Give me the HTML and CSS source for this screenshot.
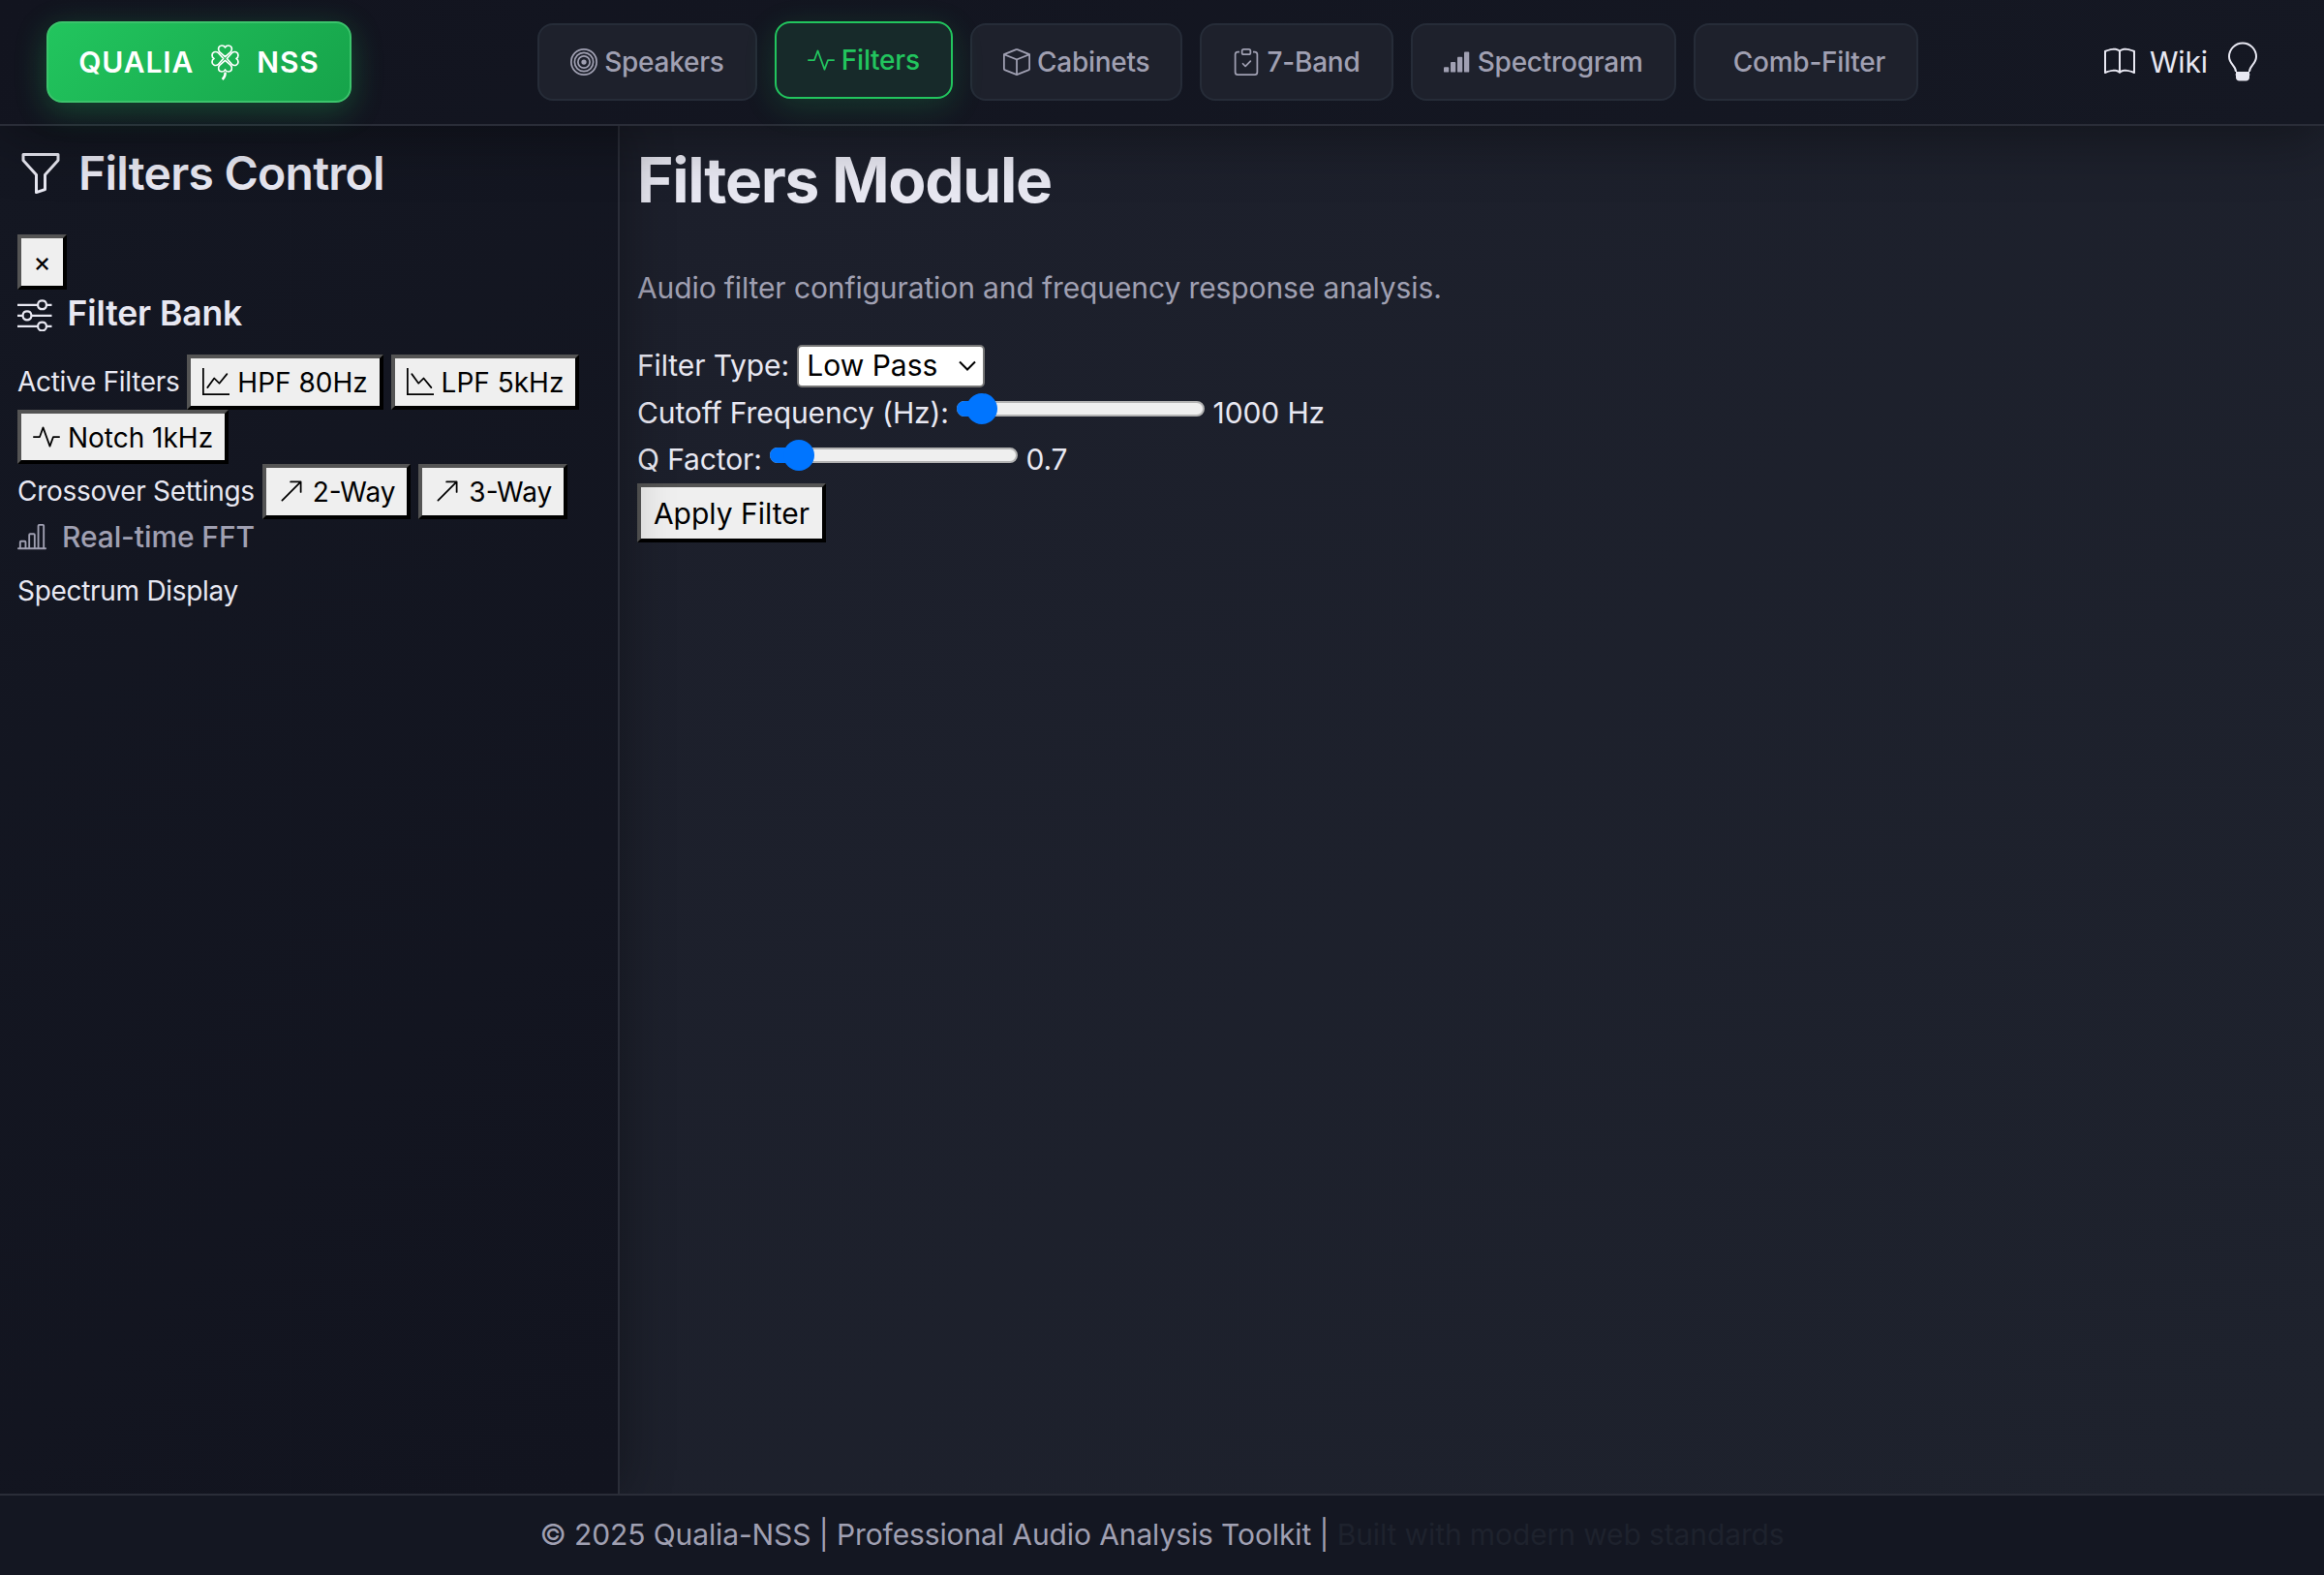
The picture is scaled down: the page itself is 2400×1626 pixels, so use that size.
FILE: index.html
```html
<!DOCTYPE html>
<html lang="en">
<head>
<meta charset="utf-8">
<title>Qualia-NSS</title>
<link rel="stylesheet" href="styles.css">
</head>
<body>
<header class="header">
  <a class="logo">QUALIA
    <svg class="clover" viewBox="0 0 29 37" fill="none" stroke="currentColor" stroke-width="1.7" stroke-linejoin="round"><defs><path id="leaf" d="M14.500 12.700L8.700 7.600C6.200 4.500 8 1 11 1C12.700 1 14 1.900 14.500 3C15 1.900 16.300 1 18 1C21 1 22.800 4.500 20.300 7.600Z"/></defs><use href="#leaf"/><use href="#leaf" transform="rotate(90 14.500 14.500)"/><use href="#leaf" transform="rotate(180 14.500 14.500)"/><use href="#leaf" transform="rotate(270 14.500 14.500)"/><path d="M14.600 28.500c.2 3-.8 5.500-3 7.500" stroke-width="2.500"/></svg>
    NSS</a>
  <nav class="nav">
    <a class="tab"><svg class="bi" viewBox="0 0 16 16" fill="none" stroke="currentColor"><circle cx="8" cy="8" r="7.5"/><circle cx="8" cy="8" r="5.5"/><circle cx="8" cy="8" r="3.5"/><circle cx="8" cy="8" r="1.5" fill="currentColor" stroke="none"/></svg> Speakers</a>
    <a class="tab active"><svg class="bi" viewBox="0 0 16 16"><path fill-rule="evenodd" d="M6 2a.5.5 0 0 1 .47.33L10 12.036l1.53-4.208A.5.5 0 0 1 12 7.5h3.5a.5.5 0 0 1 0 1h-3.15l-1.88 5.17a.5.5 0 0 1-.94 0L6 3.964 4.47 8.171A.5.5 0 0 1 4 8.5H.5a.5.5 0 0 1 0-1h3.15l1.88-5.17A.5.5 0 0 1 6 2"/></svg> Filters</a>
    <a class="tab"><svg class="bi" viewBox="0 0 16 16"><path d="M8.186 1.113a.5.5 0 0 0-.372 0L1.846 3.5 8 5.961 14.154 3.5zM15 4.239l-6.5 2.6v7.922l6.5-2.6V4.24zM7.5 14.762V6.838L1 4.239v7.923zM7.443.184a1.5 1.5 0 0 1 1.114 0l7.129 2.852A.5.5 0 0 1 16 3.5v8.662a1 1 0 0 1-.629.928l-7.185 2.874a.5.5 0 0 1-.372 0L.63 13.09a1 1 0 0 1-.63-.928V3.5a.5.5 0 0 1 .314-.464z"/></svg> Cabinets</a>
    <a class="tab"><svg class="bi" viewBox="0 0 16 16"><path fill-rule="evenodd" d="M10.854 7.146a.5.5 0 0 1 0 .708l-3 3a.5.5 0 0 1-.708 0l-1.5-1.5a.5.5 0 1 1 .708-.708L7.5 9.793l2.646-2.647a.5.5 0 0 1 .708 0"/><path d="M4 1.5H3a2 2 0 0 0-2 2V14a2 2 0 0 0 2 2h10a2 2 0 0 0 2-2V3.500a2 2 0 0 0-2-2h-1v1h1a1 1 0 0 1 1 1V14a1 1 0 0 1-1 1H3a1 1 0 0 1-1-1V3.500a1 1 0 0 1 1-1h1z"/><path d="M9.500 1a.5.5 0 0 1 .5.5v1a.5.5 0 0 1-.5.5h-3a.5.5 0 0 1-.5-.5v-1a.5.5 0 0 1 .5-.5zm-3-1A1.500 1.500 0 0 0 5 1.500v1A1.500 1.500 0 0 0 6.500 4h3A1.500 1.500 0 0 0 11 2.500v-1A1.500 1.500 0 0 0 9.500 0z"/></svg> 7-Band</a>
    <a class="tab"><svg class="bi" viewBox="0 0 16 16"><rect x="0" y="11" width="3" height="3" rx=".5"/><rect x="4" y="8" width="3" height="6" rx=".5"/><rect x="8" y="5" width="3" height="9" rx=".5"/><rect x="12" y="2" width="3" height="12" rx=".5"/></svg> Spectrogram</a>
    <a class="tab">&nbsp;Comb-Filter</a>
  </nav>
  <div class="tools">
    <svg class="book" viewBox="0 0 16 16"><path d="M1 2.828c.885-.37 2.154-.769 3.388-.893 1.330-.134 2.458.063 3.112.752v9.746c-.935-.53-2.120-.603-3.213-.493-1.180.12-2.370.461-3.287.811zm7.500-.141c.654-.689 1.782-.886 3.112-.752 1.234.124 2.503.523 3.388.893v9.923c-.918-.35-2.107-.692-3.287-.81-1.094-.111-2.278-.039-3.213.492zM8 1.783C7.015.936 5.587.81 4.287.94c-1.514.153-3.042.672-3.994 1.105A.5.5 0 0 0 0 2.500v11a.5.5 0 0 0 .707.455c.882-.4 2.303-.881 3.680-1.020 1.409-.142 2.590.087 3.223.877a.5.5 0 0 0 .78 0c.633-.79 1.814-1.019 3.222-.877 1.378.139 2.800.62 3.681 1.020A.5.5 0 0 0 16 13.500v-11a.5.5 0 0 0-.293-.455c-.952-.433-2.480-.952-3.994-1.105C10.413.809 8.985.936 8 1.783"/></svg>
    <span class="wiki">Wiki</span>
    <svg class="bulb" viewBox="0 0 32 42"><path fill="none" stroke="currentColor" stroke-width="2" d="M9 31C9 25 2 23 2 15.500A14 14 0 0 1 30 15.500C30 23 23 25 23 31"/><path d="M9 31h14v2l.5 1-.5 1v2c0 2-1.500 3.500-3.500 3.500h-7C10.500 40.500 9 39 9 37v-2l-.5-1 .5-1z"/></svg>
  </div>
</header>
<div class="body">
  <aside class="sidebar">
    <h4 class="side-title"><svg class="funnel" viewBox="0 0 16 16"><path d="M1.500 1.500A.5.5 0 0 1 2 1h12a.5.5 0 0 1 .5.5v2a.5.5 0 0 1-.128.334L10 8.692V13.500a.5.5 0 0 1-.342.474l-3 1A.5.5 0 0 1 6 14.500V8.692L1.628 3.834A.5.5 0 0 1 1.500 3.500zm1 .5v1.308l4.372 4.858A.5.5 0 0 1 7 8.500v5.306l2-.666V8.500a.5.5 0 0 1 .128-.334L13.500 3.308V2z"/></svg>Filters Control</h4>
    <button class="btn close">×</button>
    <h5 class="bank"><svg class="bi" viewBox="0 0 16 16"><path fill-rule="evenodd" d="M11.500 2a1.500 1.500 0 1 0 0 3 1.500 1.500 0 0 0 0-3M9.050 3a2.500 2.500 0 0 1 4.900 0H16v1h-2.050a2.500 2.500 0 0 1-4.900 0H0V3zM4.500 7a1.500 1.500 0 1 0 0 3 1.500 1.500 0 0 0 0-3M2.050 8a2.500 2.500 0 0 1 4.900 0H16v1H6.950a2.500 2.500 0 0 1-4.900 0H0V8zm9.450 4a1.500 1.500 0 1 0 0 3 1.500 1.500 0 0 0 0-3m-2.450 1a2.500 2.500 0 0 1 4.900 0H16v1h-2.050a2.500 2.500 0 0 1-4.900 0H0v-1z"/></svg>Filter Bank</h5>
    <div class="group">Active Filters
      <button class="btn"><svg class="bi" viewBox="0 0 16 16"><path fill-rule="evenodd" d="M0 0h1v15h15v1H0zm14.817 3.113a.5.5 0 0 1 .07.704l-4.500 5.500a.5.5 0 0 1-.74.037L7.060 6.767l-3.656 5.027a.5.5 0 0 1-.808-.588l4-5.500a.5.5 0 0 1 .758-.06l2.609 2.610 4.150-5.073a.5.5 0 0 1 .704-.07"/></svg> HPF 80Hz</button>
      <button class="btn"><svg class="bi" viewBox="0 0 16 16"><path fill-rule="evenodd" d="M0 0h1v15h15v1H0zm14.817 11.887a.5.5 0 0 0 .07-.704l-4.500-5.500a.5.5 0 0 0-.74-.037L7.060 8.233 3.404 3.206a.5.5 0 0 0-.808.588l4 5.500a.5.5 0 0 0 .758.06l2.609-2.610 4.150 5.073a.5.5 0 0 0 .704.07"/></svg> LPF 5kHz</button>
      <button class="btn"><svg class="bi" viewBox="0 0 16 16"><path fill-rule="evenodd" d="M6 2a.5.5 0 0 1 .47.33L10 12.036l1.530-4.208A.5.5 0 0 1 12 7.500h3.500a.5.5 0 0 1 0 1h-3.150l-1.880 5.170a.5.5 0 0 1-.94 0L6 3.964 4.470 8.171A.5.5 0 0 1 4 8.500H.5a.5.5 0 0 1 0-1h3.150l1.880-5.170A.5.5 0 0 1 6 2"/></svg> Notch 1kHz</button>
    </div>
    <div class="group">Crossover Settings
      <button class="btn"><svg class="bi" viewBox="0 0 16 16"><path fill-rule="evenodd" d="M14 2.500a.5.5 0 0 0-.5-.5h-6a.5.5 0 0 0 0 1h4.793L2.146 13.146a.5.5 0 0 0 .708.708L13 3.707V8.500a.5.5 0 0 0 1 0z"/></svg> 2-Way</button>
      <button class="btn"><svg class="bi" viewBox="0 0 16 16"><path fill-rule="evenodd" d="M14 2.500a.5.5 0 0 0-.5-.5h-6a.5.5 0 0 0 0 1h4.793L2.146 13.146a.5.5 0 0 0 .708.708L13 3.707V8.500a.5.5 0 0 0 1 0z"/></svg> 3-Way</button>
    </div>
    <h6 class="fft"><svg class="bi" viewBox="0 0 16 16"><path d="M11 2a1 1 0 0 1 1-1h2a1 1 0 0 1 1 1v12h.5a.5.5 0 0 1 0 1H.5a.5.5 0 0 1 0-1H1v-3a1 1 0 0 1 1-1h2a1 1 0 0 1 1 1v3h1V7a1 1 0 0 1 1-1h2a1 1 0 0 1 1 1v7h1zm1 12h2V2h-2zm-3 0V7H7v7zm-5 0v-3H2v3z"/></svg>Real-time FFT</h6>
    <div class="group">Spectrum Display</div>
  </aside>
  <main class="main">
    <h1 class="title">Filters Module</h1>
    <p class="lead">Audio filter configuration and frequency response analysis.</p>
    <div class="field">Filter Type: <span class="select">Low Pass<svg class="chev" viewBox="0 0 18 12" fill="none" stroke="currentColor" stroke-width="2"><path d="M1 1.500l8 8 8-8"/></svg></span></div>
    <div class="field">Cutoff Frequency (Hz): <span class="range"><span class="fill"></span><span class="knob"></span></span> 1000 Hz</div>
    <div class="field">Q Factor: <span class="range q"><span class="fill"></span><span class="knob"></span></span> 0.7</div>
    <button class="btn apply">Apply Filter</button>
  </main>
</div>
<footer class="footer"><span>© 2025 Qualia-NSS | Professional Audio Analysis Toolkit | <span class="dim">Built with modern web standards</span></span></footer>
</body>
</html>
```
FILE: styles.css
```css
* { box-sizing: border-box; }
body {
  margin: 0;
  height: 1626px;
  overflow: hidden;
  display: flex;
  flex-direction: column;
  font: 30px/1.6 Inter, sans-serif;
  letter-spacing: -.11px;
  color: #e8e8f2;
  background: #141722;
}
svg { fill: currentColor; }
svg[fill="none"] { fill: none; }
.bi { width: 1em; height: 1em; vertical-align: -0.125em; }
.header {
  position: relative;
  z-index: 3;
  height: 130px;
  flex: none;
  display: flex;
  align-items: center;
  padding: 0 68px 0 48px;
  border-bottom: 2px solid #2a2d38;
  background: linear-gradient(135deg, #12141f, #151823);
  box-shadow: 0 8px 64px rgba(0, 0, 0, .4);
}
.logo {
  display: flex;
  align-items: center;
  justify-content: center;
  gap: 18px;
  width: 315px;
  height: 84px;
  border: 2px solid #3cc46c;
  border-radius: 16px;
  background: linear-gradient(135deg, #22c55e, #16a34a);
  box-shadow: 0 8px 32px rgba(34, 197, 94, .3);
  color: #fff;
  font-weight: 600;
  letter-spacing: .9px;
}
.clover { width: 29px; height: 37px; }
.nav { display: flex; gap: 18px; margin-left: 192px; }
.tab {
  height: 80px;
  padding: 0 32px;
  border: 2px solid #262c38;
  border-radius: 16px;
  background: #1e212c;
  color: #a0a0b2;
  font-size: 28px;
  font-weight: 500;
  letter-spacing: -.25px;
  line-height: 76px;
  white-space: nowrap;
}
.tab.active {
  color: #22c55e;
  border-color: #22c55e;
  background: #172a2a;
  transform: translateY(-2px);
  box-shadow: 0 8px 32px rgba(34, 197, 94, .2);
}
.tools { display: flex; align-items: center; margin-left: auto; }
.book { width: 32px; height: 32px; margin-right: 15px; }
.wiki { margin-right: 20px; }
.bulb { width: 32px; height: 42px; }
.body { flex: 1; display: flex; min-height: 0; }
.sidebar {
  position: relative;
  z-index: 2;
  width: 640px;
  flex: none;
  padding: 16px 18px;
  border-right: 2px solid #2a2d38;
  background: linear-gradient(135deg, #141722, #12141f);
  box-shadow: 4px 0 48px rgba(0, 0, 0, .3);
  font-size: 28px;
}
.side-title {
  display: flex;
  align-items: center;
  height: 66px;
  margin: 0 0 30px;
  font-size: 48px;
  font-weight: 600;
  letter-spacing: -.75px;
}
.funnel { width: 48px; height: 48px; margin-right: 15px; }
.btn {
  height: 56.5px;
  padding: 0 12px;
  border: 4px outset #000;
  border-radius: 0;
  background: #efefef;
  color: #000;
  font: 28px/1 Inter, sans-serif;
  letter-spacing: 0;
}
.close { display: block; width: 51px; }
.bank {
  display: flex;
  align-items: center;
  gap: 16px;
  height: 51.5px;
  margin: 0 0 16px;
  font-size: 35.5px;
  font-weight: 600;
}
.group {
  display: flex;
  flex-wrap: wrap;
  align-items: center;
  column-gap: 8px;
  line-height: 56.5px;
  letter-spacing: -.3px;
}
.fft {
  display: flex;
  align-items: center;
  gap: 16px;
  height: 37px;
  margin: 0 0 9px;
  color: #a0a0b2;
  font-size: 30px;
  font-weight: 500;
}
.main { flex: 1; padding: 18px; background: linear-gradient(135deg, #1c1f2b, #1e222d); }
.title { margin: 0 0 49px; font-size: 64px; line-height: 76px; font-weight: 700; letter-spacing: -1.28px; }
.lead { margin: 0 0 32px; color: #a0a0b2; line-height: 48px; }
.field { height: 48.7px; line-height: 48.7px; white-space: nowrap; }
.select {
  display: inline-flex;
  align-items: center;
  justify-content: space-between;
  width: 194px;
  height: 44px;
  padding: 0 7px 0 8px;
  vertical-align: middle;
  margin-top: -4px;
  border: 2px solid #767676;
  border-radius: 5px;
  background: #fff;
  color: #000;
  letter-spacing: 0;
}
.chev { width: 18px; height: 12px; }
.range {
  position: relative;
  display: inline-block;
  width: 256px;
  height: 16px;
  border: 2px solid #b2b2b2;
  border-radius: 8px;
  background: #efefef;
  vertical-align: 7px;
}
.fill { position: absolute; left: -2px; top: -2px; width: 24px; height: 16px; border-radius: 8px 0 0 8px; background: #0075ff; }
.knob { position: absolute; left: 8px; top: -10px; width: 32px; height: 32px; border-radius: 50%; background: #0075ff; }
.q .knob { left: 12px; }
.apply { height: 61px; width: 195px; font-size: 30px; }
.footer {
  position: relative;
  z-index: 3;
  height: 84px;
  flex: none;
  display: flex;
  justify-content: center;
  align-items: center;
  padding-bottom: 2px;
  border-top: 2px solid #2a2d38;
  background: #141722;
  color: #a0a0b2;
}
.dim { color: #1e222d; }
```
